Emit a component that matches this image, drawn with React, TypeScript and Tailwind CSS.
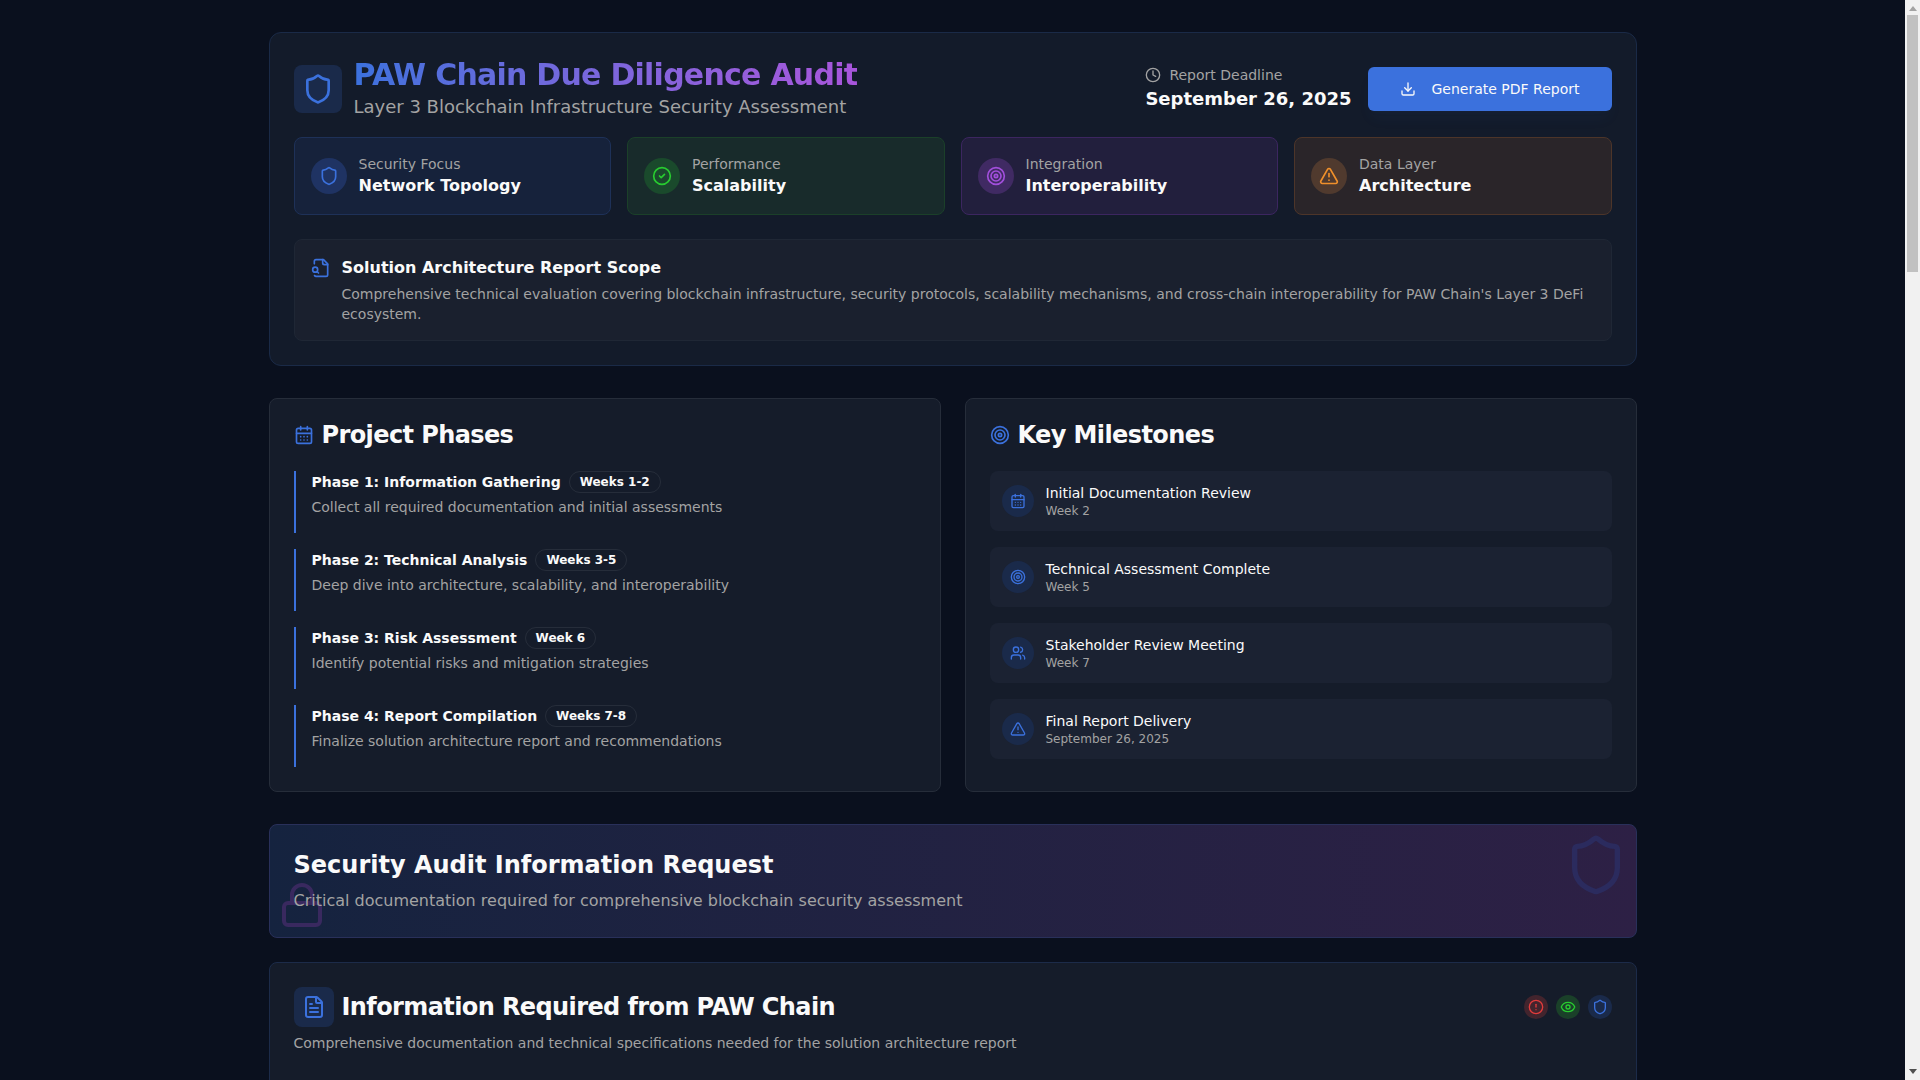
import {
  Shield, Clock, Download, CircleCheck, Target, TriangleAlert, CalendarDays, Users, FileText, CircleAlert, Eye, Lock,
} from "lucide-react";

const stats = [
  { label: "Security Focus", value: "Network Topology", Icon: Shield, card: "bg-[#16223b] border-[#1e3158]", circle: "bg-[#1f3363]", icon: "text-[#3b71dd]" },
  { label: "Performance", value: "Scalability", Icon: CircleCheck, card: "bg-[#182b2b] border-[#1b4029]", circle: "bg-[#1a4a2c]", icon: "text-[#28cc30]" },
  { label: "Integration", value: "Interoperability", Icon: Target, card: "bg-[#221f3d] border-[#3c2660]", circle: "bg-[#402a63]", icon: "text-[#a24fdc]" },
  { label: "Data Layer", value: "Architecture", Icon: TriangleAlert, card: "bg-[#2a2529] border-[#4d3529]", circle: "bg-[#503a2e]", icon: "text-[#f0902b]" },
];

const phases = [
  { title: "Phase 1: Information Gathering", badge: "Weeks 1-2", desc: "Collect all required documentation and initial assessments" },
  { title: "Phase 2: Technical Analysis", badge: "Weeks 3-5", desc: "Deep dive into architecture, scalability, and interoperability" },
  { title: "Phase 3: Risk Assessment", badge: "Week 6", desc: "Identify potential risks and mitigation strategies" },
  { title: "Phase 4: Report Compilation", badge: "Weeks 7-8", desc: "Finalize solution architecture report and recommendations" },
];

const milestones = [
  { title: "Initial Documentation Review", sub: "Week 2", Icon: CalendarDays },
  { title: "Technical Assessment Complete", sub: "Week 5", Icon: Target },
  { title: "Stakeholder Review Meeting", sub: "Week 7", Icon: Users },
  { title: "Final Report Delivery", sub: "September 26, 2025", Icon: TriangleAlert },
];

function FileSearchOld({ className }: { className?: string }) {
  return (
    <svg viewBox="0 0 24 24" fill="none" stroke="currentColor" strokeWidth="2" strokeLinecap="round" strokeLinejoin="round" className={className}>
      <path d="M14 2v4a2 2 0 0 0 2 2h4" />
      <path d="M4.268 21a2 2 0 0 0 1.727 1H18a2 2 0 0 0 2-2V7l-5-5H6a2 2 0 0 0-2 2v3" />
      <path d="m9 18-1.5-1.5" />
      <circle cx="5" cy="14" r="3" />
    </svg>
  );
}

function Scrollbar() {
  return (
    <aside className="flex h-screen w-[15px] shrink-0 flex-col items-center bg-[#f1f1f1]">
      <svg viewBox="0 0 8 5" className="mt-[6px] h-[5px] w-2 fill-[#a3a3a3]"><path d="M4 0 8 5H0z" /></svg>
      <div className="mt-[4px] h-[257px] w-[11px] bg-[#c1c1c1]" />
      <svg viewBox="0 0 8 5" className="mt-auto mb-[6px] h-[5px] w-2 fill-[#505050]"><path d="M4 5 8 0H0z" /></svg>
    </aside>
  );
}

export default function App() {
  return (
    <div className="flex h-screen overflow-hidden bg-[#0a101e] font-['DejaVu_Sans',sans-serif] text-[#fafafa]">
      <main className="min-w-0 flex-1">
        <div className="mx-auto max-w-[1400px] px-4 py-8">
          <header className="mb-8 rounded-xl border border-[#1a2a47] bg-[#131b2a] p-6">
            <div className="mb-4 flex items-center justify-between">
              <div className="flex items-center gap-3">
                <div className="rounded-lg bg-[#1a2a4a] p-2">
                  <Shield className="h-8 w-8 text-[#3b71dd]" />
                </div>
                <div>
                  <h1 className="bg-gradient-to-r from-[#3b71dd] to-[#a855db] bg-clip-text text-3xl font-bold tracking-tight text-transparent">PAW Chain Due Diligence Audit</h1>
                  <p className="text-lg text-[#a3a3a3]">Layer 3 Blockchain Infrastructure Security Assessment</p>
                </div>
              </div>
              <div className="flex items-center gap-4">
                <div>
                  <div className="flex items-center gap-2 text-sm text-[#a3a3a3]">
                    <Clock className="h-4 w-4" />
                    <span>Report Deadline</span>
                  </div>
                  <div className="text-lg font-bold">September 26, 2025</div>
                </div>
                <button className="flex items-center gap-4 rounded-md bg-[#3b71dd] px-8 py-3 text-sm font-medium shadow-lg shadow-[#3b71dd]/5">
                  <Download className="h-4 w-4" />
                  Generate PDF Report
                </button>
              </div>
            </div>
            <div className="mb-6 grid grid-cols-4 gap-4">
              {stats.map(({ label, value, Icon, card, circle, icon }) => (
                <div key={label} className={`flex items-center gap-3 rounded-lg border p-4 ${card}`}>
                  <div className={`rounded-full p-2 ${circle}`}>
                    <Icon className={`h-5 w-5 ${icon}`} />
                  </div>
                  <div>
                    <p className="text-sm text-[#a3a3a3]">{label}</p>
                    <p className="font-semibold">{value}</p>
                  </div>
                </div>
              ))}
            </div>
            <div className="rounded-lg border border-[#1f2735] bg-[#1a202e] p-4">
              <div className="flex items-start gap-[11px]">
                <FileSearchOld className="mt-0.5 h-5 w-5 shrink-0 text-[#3b71dd]" />
                <div>
                  <h3 className="mb-1 font-semibold">Solution Architecture Report Scope</h3>
                  <p className="text-sm text-[#a3a3a3]">Comprehensive technical evaluation covering blockchain infrastructure, security protocols, scalability mechanisms, and cross-chain interoperability for PAW Chain's Layer 3 DeFi ecosystem.</p>
                </div>
              </div>
            </div>
          </header>

          <div className="mb-8 grid grid-cols-2 gap-6">
            <section className="rounded-lg border border-[#262d3a] bg-[#151c2a]">
              <div className="p-6">
                <h2 className="flex items-center gap-2 text-2xl leading-none font-bold tracking-tight">
                  <CalendarDays className="h-5 w-5 text-[#3b71dd]" />
                  Project Phases
                </h2>
              </div>
              <div className="space-y-4 px-6 pb-6">
                {phases.map((p) => (
                  <div key={p.title} className="border-l-2 border-[#3b71dd] pb-4 pl-4">
                    <div className="flex items-center gap-2">
                      <h3 className="text-sm font-semibold">{p.title}</h3>
                      <span className="rounded-full border border-[#262d3a] px-2.5 py-0.5 text-xs font-semibold">{p.badge}</span>
                    </div>
                    <p className="mt-1 text-sm text-[#a3a3a3]">{p.desc}</p>
                  </div>
                ))}
              </div>
            </section>
            <section className="rounded-lg border border-[#262d3a] bg-[#151c2a]">
              <div className="p-6">
                <h2 className="flex items-center gap-2 text-2xl leading-none font-bold tracking-tight">
                  <Target className="h-5 w-5 text-[#3b71dd]" />
                  Key Milestones
                </h2>
              </div>
              <div className="space-y-4 px-6 pb-6">
                {milestones.map(({ title, sub, Icon }) => (
                  <div key={title} className="flex items-center gap-3 rounded-lg bg-[#1b2232] p-3">
                    <div className="rounded-full bg-[#1a2a4a] p-2">
                      <Icon className="h-4 w-4 text-[#3b71dd]" />
                    </div>
                    <div>
                      <p className="text-sm font-medium">{title}</p>
                      <p className="text-xs text-[#a3a3a3]">{sub}</p>
                    </div>
                  </div>
                ))}
              </div>
            </section>
          </div>

          <section className="relative mb-6 overflow-hidden rounded-lg border border-[#29305a] bg-gradient-to-r from-[#15233f] to-[#2d2045] p-6">
            <Shield className="absolute top-2 right-2 h-16 w-16 text-[#2b2b5e]" />
            <Lock className="absolute bottom-2 left-2 h-12 w-12 text-[#39295f]" />
            <div className="relative">
              <h2 className="mb-2 text-2xl font-bold">Security Audit Information Request</h2>
              <p className="text-[#a3a3a3]">Critical documentation required for comprehensive blockchain security assessment</p>
            </div>
          </section>

          <section className="min-h-[400px] rounded-lg border border-[#1c2b49] bg-[#151c2a] p-6">
            <div className="flex items-center justify-between">
              <div className="flex items-center gap-2">
                <div className="rounded-lg bg-[#1a2a4a] p-2">
                  <FileText className="h-6 w-6 text-[#3b71dd]" />
                </div>
                <h2 className="text-2xl font-bold tracking-tight">Information Required from PAW Chain</h2>
              </div>
              <div className="flex items-center gap-2">
                <div className="rounded-full bg-[#42242d] p-1"><CircleAlert className="h-4 w-4 text-[#e13b3b]" /></div>
                <div className="rounded-full bg-[#1a4029] p-1"><Eye className="h-4 w-4 text-[#28cc30]" /></div>
                <div className="rounded-full bg-[#1a2a4a] p-1"><Shield className="h-4 w-4 text-[#3b71dd]" /></div>
              </div>
            </div>
            <p className="mt-1.5 text-sm text-[#a3a3a3]">Comprehensive documentation and technical specifications needed for the solution architecture report</p>
          </section>
        </div>
      </main>
      <Scrollbar />
    </div>
  );
}
